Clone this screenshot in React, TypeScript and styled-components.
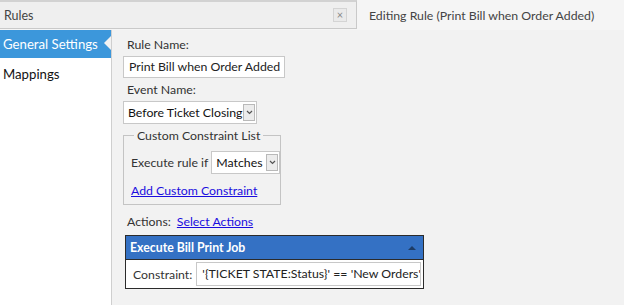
import React from "react";
import styled, { createGlobalStyle } from "styled-components";

const GlobalStyle = createGlobalStyle`
  html, body {
    margin: 0;
    padding: 0;
    background: #f5f5f5;
    font-family: Lato, "Open Sans", sans-serif;
    font-size: 12.3px;
    color: #222;
    white-space: nowrap;
  }
`;

const Page = styled.div`
  width: 624px;
  height: 305px;
  display: flex;
  flex-direction: column;
  overflow: hidden;
`;

const TopRow = styled.div`
  display: flex;
  height: 30px;
`;

const PanelHeader = styled.div`
  width: 343px;
  height: 26px;
  border-top: 2px solid #d2d2d2;
  border-bottom: 1px solid #c9c9c9;
  border-right: 1px solid #c9c9c9;
  background: #efefef;
  display: flex;
  align-items: center;
  justify-content: space-between;
  padding: 0 9px 0 4px;
  box-sizing: content-box;
  color: #444;
  font-size: 12.5px;
`;

const CloseButton = styled.div`
  width: 12px;
  height: 12px;
  border: 1px solid #d4d4d4;
  background: #eaeaea;
  color: #888;
  font-size: 11px;
  line-height: 11px;
  text-align: center;
`;

const Title = styled.div`
  padding: 8px 0 0 12px;
  color: #444;
`;

const Main = styled.div`
  flex: 1;
  display: flex;
`;

const Sidebar = styled.div`
  width: 111px;
  background: #fff;
  border-right: 1px solid #cfcfcf;
`;

const NavItem = styled.div<{ $active?: boolean }>`
  position: relative;
  height: 28px;
  line-height: 28px;
  padding-left: 3px;
  font-size: 13.2px;
  background: ${(p) => (p.$active ? "#3c97db" : "transparent")};
  color: ${(p) => (p.$active ? "#fff" : "#111")};
  margin-bottom: 2px;
`;

const NavArrow = styled.span`
  position: absolute;
  right: 0;
  top: 6px;
  width: 0;
  height: 0;
  border-top: 7px solid transparent;
  border-bottom: 7px solid transparent;
  border-right: 7px solid #f2f2f2;
`;

const Content = styled.div`
  flex: 1;
  background: #f2f2f2;
  padding: 6px 0 0 11px;
  display: flex;
  flex-direction: column;
  align-items: flex-start;
`;

const Label = styled.div`
  color: #333;
  padding-left: 4px;
  height: 18px;
  line-height: 18px;
`;

const TextBox = styled.div<{ $width: number }>`
  width: ${(p) => p.$width}px;
  height: 22px;
  line-height: 20px;
  border: 1px solid #c8c8c8;
  background: #fff;
  padding-left: 5px;
  box-sizing: border-box;
  color: #222;
  overflow: hidden;
`;

const ConstraintBox = styled(TextBox)`
  height: 24px;
  line-height: 22px;
  padding-left: 5px;
`;

const Select = styled.div<{ $width: number }>`
  width: ${(p) => p.$width}px;
  height: 23px;
  border: 1px solid #c8c8c8;
  background: #fff;
  box-sizing: border-box;
  display: flex;
  align-items: center;
  justify-content: space-between;
  padding: 0 1px 0 4px;
  color: #111;
  flex-shrink: 0;
`;

const SelectArrow = styled.span`
  width: 12px;
  height: 17px;
  border: 1px solid #b9b9b9;
  background: #ececec;
  box-sizing: border-box;
  display: flex;
  align-items: center;
  justify-content: center;
`;

const Fieldset = styled.fieldset`
  margin: 4px 0 0 0;
  width: 158px;
  min-width: 0;
  box-sizing: border-box;
  border: 1px solid #c4c4c4;
  padding: 8px 3px 6px 7px;
  display: flex;
  flex-direction: column;
  align-items: flex-start;
  gap: 9px;
`;

const Legend = styled.legend`
  padding: 0 3px;
  margin-left: 3px;
  color: #333;
`;

const Row = styled.div`
  display: flex;
  align-items: center;
  gap: 3px;
  color: #333;
`;

const Link = styled.a`
  color: #1a0ddf;
  text-decoration: underline;
  cursor: pointer;
`;

const ActionsRow = styled.div`
  display: flex;
  gap: 6px;
  padding-left: 4px;
  margin-top: 9px;
  color: #333;
`;

const ActionPanel = styled.div`
  margin: 6px 0 0 2px;
  width: 297px;
  border: 1px solid #2b2b2b;
  background: #fff;
`;

const ActionHeader = styled.div`
  height: 23px;
  background: #3471c4;
  color: #fff;
  font-weight: 700;
  display: flex;
  align-items: center;
  justify-content: space-between;
  padding: 0 7px 0 4px;
  border-bottom: 1px solid #2b2b2b;
`;

const ActionBody = styled.div`
  display: flex;
  align-items: center;
  gap: 4px;
  padding: 2px 2px 2px 7px;
  color: #333;
`;

const ChevronDown = () => (
  <svg width="7" height="5" viewBox="0 0 7 5">
    <path d="M1 1 L3.5 3.5 L6 1" fill="none" stroke="#555" strokeWidth="1.2" />
  </svg>
);

const CollapseTriangle = () => (
  <svg width="8" height="5" viewBox="0 0 8 5">
    <path d="M0 5 L4 1 L8 5 Z" fill="#1d3c66" />
  </svg>
);

const App: React.FC = () => {
  return (
    <>
      <GlobalStyle />
      <Page>
        <TopRow>
          <PanelHeader>
            <span>Rules</span>
            <CloseButton>×</CloseButton>
          </PanelHeader>
          <Title>Editing Rule (Print Bill when Order Added)</Title>
        </TopRow>
        <Main>
          <Sidebar>
            <NavItem $active>
              General Settings
              <NavArrow />
            </NavItem>
            <NavItem>Mappings</NavItem>
          </Sidebar>
          <Content>
            <Label>Rule Name:</Label>
            <TextBox $width={162} style={{ marginTop: 2 }}>
              Print Bill when Order Added
            </TextBox>
            <Label style={{ marginTop: 3 }}>Event Name:</Label>
            <Select $width={134} style={{ marginTop: 2 }}>
              Before Ticket Closing
              <SelectArrow>
                <ChevronDown />
              </SelectArrow>
            </Select>
            <Fieldset>
              <Legend>Custom Constraint List</Legend>
              <Row>
                <span>Execute rule if</span>
                <Select $width={69}>
                  Matches
                  <SelectArrow>
                    <ChevronDown />
                  </SelectArrow>
                </Select>
              </Row>
              <Link>Add Custom Constraint</Link>
            </Fieldset>
            <ActionsRow>
              <span>Actions:</span>
              <Link>Select Actions</Link>
            </ActionsRow>
            <ActionPanel>
              <ActionHeader>
                <span>Execute Bill Print Job</span>
                <CollapseTriangle />
              </ActionHeader>
              <ActionBody>
                <span>Constraint:</span>
                <ConstraintBox $width={226}>
                  '{"{"}TICKET STATE:Status{"}"}' == 'New Orders'
                </ConstraintBox>
              </ActionBody>
            </ActionPanel>
          </Content>
        </Main>
      </Page>
    </>
  );
};

export default App;
